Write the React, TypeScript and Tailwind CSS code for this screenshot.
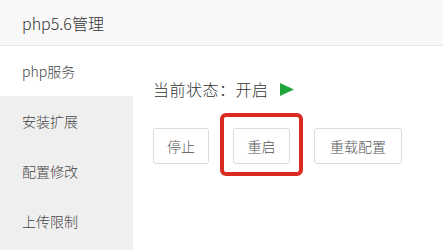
import React from 'react';

const font = { fontFamily: '"Noto Sans CJK SC", "Noto Sans", sans-serif' };

const menu = ['php服务', '安装扩展', '配置修改', '上传限制'];

const Btn = ({ label, w }: { label: string; w: string }) => (
  <button
    className={`h-[36px] ${w} rounded-[3px] border border-[#dcdcdc] bg-white text-[14px] text-[#555] leading-none font-light`}
  >
    {label}
  </button>
);

export default function App() {
  return (
    <div className="w-[443px] h-[250px] overflow-hidden bg-white flex flex-col font-light" style={font}>
      <div className="h-[46px] shrink-0 bg-[#f8f8f8] border-b border-[#e9e9e9] flex items-center pl-[22px]">
        <span className="text-[16px] text-[#333]">php5.6管理</span>
      </div>
      <div className="flex flex-1">
        <div className="w-[133px] bg-[#efefef] flex flex-col">
          {menu.map((m, i) => (
            <div
              key={m}
              className={`h-[50px] flex items-center pl-[22px] text-[14px] text-[#444] ${
                i === 0 ? 'bg-white' : ''
              }`}
            >
              {m}
            </div>
          ))}
        </div>
        <div className="flex-1 pl-[20px] pt-[31px]">
          <div className="flex items-center h-[24px] text-[16px] text-[#333] tracking-[0.5px]">
            <span>当前状态：开启</span>
            <svg width="14" height="13" viewBox="0 0 14 13" className="ml-[11px]">
              <polygon points="0,0 14,6.5 0,13" fill="#20a53a" />
            </svg>
          </div>
          <div className="flex gap-[24px] mt-[27px]">
            <Btn label="停止" w="w-[56px]" />
            <div className="relative">
              <Btn label="重启" w="w-[57px]" />
              <div className="absolute left-[-13px] right-[-13px] top-[-15px] bottom-[-12px] border-[4px] border-[#d92b1f] rounded-[6px] pointer-events-none" />
            </div>
            <Btn label="重载配置" w="w-[88px]" />
          </div>
        </div>
      </div>
    </div>
  );
}
